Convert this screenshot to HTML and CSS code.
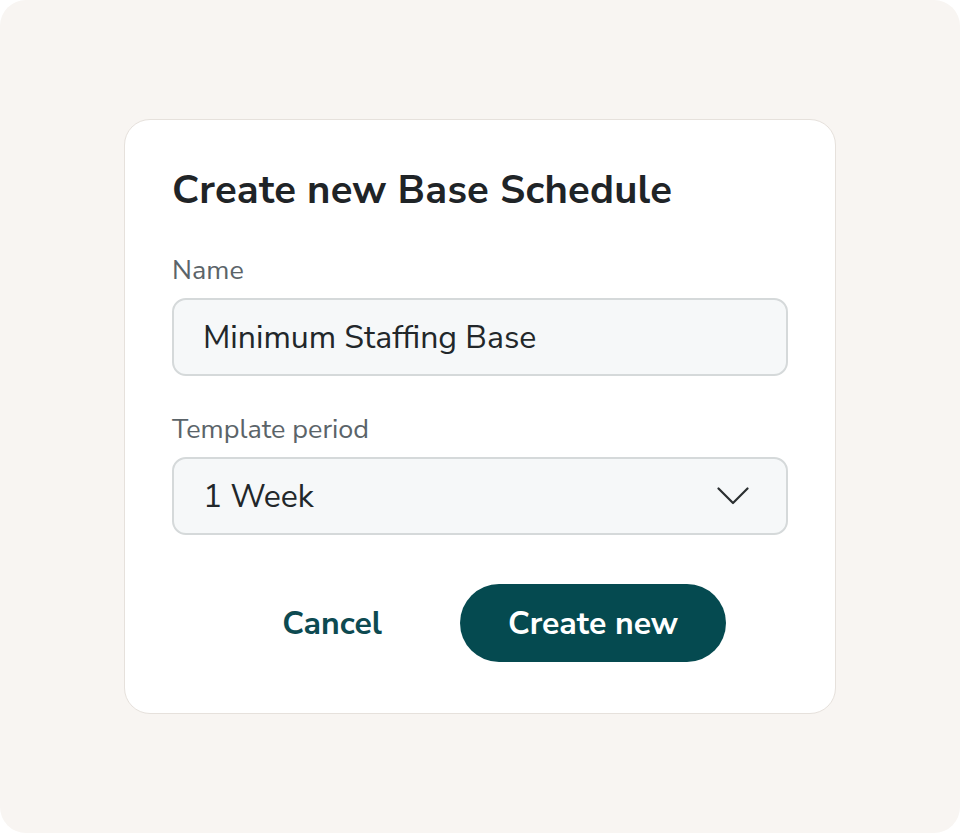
FILE: index.html
```html
<!DOCTYPE html>
<html>
<head>
<meta charset="utf-8">
<link rel="stylesheet" href="styles.css">
</head>
<body>
<div class="frame">
  <div class="card">
    <h1 class="title">Create new Base Schedule</h1>
    <div class="field">
      <label class="label">Name</label>
      <div class="input">Minimum Staffing Base</div>
    </div>
    <div class="field">
      <label class="label">Template period</label>
      <div class="input select">
        <span>1 Week</span>
        <svg class="chevron" width="32" height="18" viewBox="0 0 32 18" fill="none">
          <path d="M1.5 1.5 L16 16 L30.5 1.5" stroke="#2b2f31" stroke-width="2.2" stroke-linecap="round" stroke-linejoin="round"/>
        </svg>
      </div>
    </div>
    <div class="actions">
      <button class="btn btn-cancel">Cancel</button>
      <button class="btn btn-primary">Create new</button>
    </div>
  </div>
</div>
</body>
</html>
```

FILE: styles.css
```css
* { box-sizing: border-box; }
html, body { margin: 0; padding: 0; background: #ffffff; }
body { font-family: "Nunito Sans", Nunito, Lato, "Noto Sans", sans-serif; }

.frame {
  width: 960px;
  height: 833px;
  background: #f8f5f2;
  border-radius: 26px;
  display: flex;
  align-items: center;
  justify-content: center;
}

.card {
  width: 712px;
  height: 595px;
  background: #ffffff;
  border: 1.5px solid #e6e1dc;
  border-radius: 26px;
  padding: 46px 47px 0 47px;
  display: flex;
  flex-direction: column;
}

.title {
  margin: 0;
  font-size: 40px;
  line-height: 48px;
  font-weight: 700;
  color: #1f2427;
  letter-spacing: 0.2px;
}

.field {
  display: flex;
  flex-direction: column;
  margin-top: 40px;
}
.field + .field { margin-top: 37px; }

.label {
  font-size: 27px;
  line-height: 34px;
  color: #5b6469;
  margin-bottom: 10px;
}

.input {
  height: 78px;
  border: 2px solid #d5d9da;
  border-radius: 14px;
  background: #f6f8f9;
  padding: 0 30px 0 29px;
  display: flex;
  align-items: center;
  font-size: 32px;
  color: #22272a;
}

.select { justify-content: space-between; padding-right: 37px; }
.chevron { display: block; }

.actions {
  display: flex;
  justify-content: flex-end;
  align-items: center;
  margin-top: 49px;
  padding-right: 62px;
  gap: 30px;
}

.btn {
  font-family: inherit;
  font-size: 32px;
  font-weight: 700;
  border: none;
  height: 78px;
  border-radius: 39px;
  cursor: pointer;
}

.btn-cancel {
  background: transparent;
  color: #0d4a51;
  padding: 0 48px;
}

.btn-primary {
  background: #054a50;
  color: #ffffff;
  width: 266px;
}
```
